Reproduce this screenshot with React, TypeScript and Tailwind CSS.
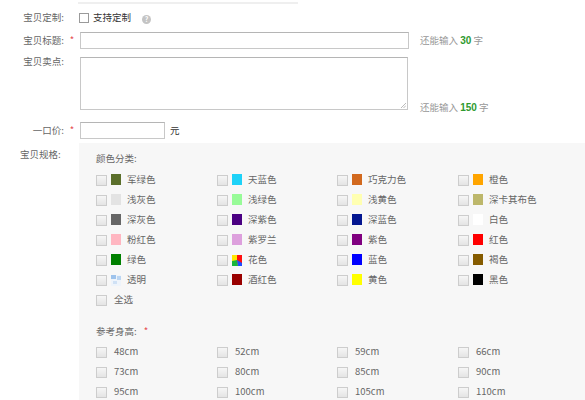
const colors = [
  { name: "军绿色", swatch: "bg-[#5b6f2b]" },
  { name: "天蓝色", swatch: "bg-[#1ed2f8]" },
  { name: "巧克力色", swatch: "bg-[#d2691e]" },
  { name: "橙色", swatch: "bg-[#ffa500]" },
  { name: "浅灰色", swatch: "bg-[#e3e3e3]" },
  { name: "浅绿色", swatch: "bg-[#98fb98]" },
  { name: "浅黄色", swatch: "bg-[#ffffb1]" },
  { name: "深卡其布色", swatch: "bg-[#bdb76b]" },
  { name: "深灰色", swatch: "bg-[#666666]" },
  { name: "深紫色", swatch: "bg-[#4b0082]" },
  { name: "深蓝色", swatch: "bg-[#041690]" },
  { name: "白色", swatch: "bg-white" },
  { name: "粉红色", swatch: "bg-[#ffb6c1]" },
  { name: "紫罗兰", swatch: "bg-[#dda0dd]" },
  { name: "紫色", swatch: "bg-[#800080]" },
  { name: "红色", swatch: "bg-[#ff0000]" },
  { name: "绿色", swatch: "bg-[#008000]" },
  { name: "花色", swatch: "flower" },
  { name: "蓝色", swatch: "bg-[#0000ff]" },
  { name: "褐色", swatch: "bg-[#855b00]" },
  { name: "透明", swatch: "clear" },
  { name: "酒红色", swatch: "bg-[#990000]" },
  { name: "黄色", swatch: "bg-[#ffff00]" },
  { name: "黑色", swatch: "bg-black" },
]

const sizes = ["48cm", "52cm", "59cm", "66cm", "73cm", "80cm", "85cm", "90cm", "95cm", "100cm", "105cm", "110cm"]

function Box() {
  return (
    <span className="inline-block w-[11px] h-[11px] shrink-0 border border-[#cdcdcd] bg-gradient-to-b from-[#f6f6f6] to-[#e4e4e4]"></span>
  )
}

function Swatch({ swatch }: { swatch: string }) {
  if (swatch === "flower") {
    return (
      <svg width="10" height="11" viewBox="0 0 10 11" className="shrink-0">
        <rect x="0" y="0" width="10" height="11" fill="#ffe600" />
        <path d="M5 0 H10 V11 H6 L5 5 Z" fill="#ff1010" />
        <path d="M0 6 L5 5 L6 11 H0 Z" fill="#19b53c" />
        <path d="M5 5 L10 8 V11 H6 Z" fill="#1f4cff" />
      </svg>
    )
  }
  if (swatch === "clear") {
    return (
      <svg width="10" height="11" viewBox="0 0 10 11" className="shrink-0">
        <rect x="0" y="0" width="10" height="11" fill="#eef4fb" />
        <rect x="0" y="0" width="5" height="4" fill="#9ec3ec" />
        <rect x="6" y="1" width="4" height="4" fill="#bcd6f2" />
        <rect x="2" y="6" width="4" height="3" fill="#cfe1f5" />
      </svg>
    )
  }
  return <span className={`inline-block w-[10px] h-[11px] shrink-0 ${swatch}`}></span>
}

function Label({ text, required }: { text: string; required?: boolean }) {
  return (
    <div className="flex w-[80px] shrink-0">
      <span className="w-[64px] text-right">{text}</span>
      <span className="w-[16px] text-center text-[#e5484b]">{required ? "*" : ""}</span>
    </div>
  )
}

function Remain({ n }: { n: string }) {
  return (
    <span className="text-[#999]">
      还能输入 <b className="text-[#2f9a2f] font-['Liberation_Sans',sans-serif] text-[10px]">{n}</b> 字
    </span>
  )
}

export default function App() {
  return (
    <div className="w-[585px] h-[400px] overflow-hidden bg-white text-[9.5px] leading-none text-[#666] font-['Noto_Sans_CJK_SC',sans-serif]">
      <div className="ml-[78px] mt-[2px] w-[220px] h-[2px] bg-[#efefef]"></div>

      <div className="flex items-center mt-[8px] h-[12px]">
        <Label text="宝贝定制:" />
        <span className="inline-block w-[10px] h-[10px] -ml-[1px] border border-[#9a9a9a] bg-white"></span>
        <span className="ml-[4px] text-[#333]">支持定制</span>
        <span className="ml-[11px] mt-[2px] w-[9px] h-[9px] rounded-full bg-[#c4c4c4] text-white text-[7px] font-bold flex items-center justify-center">?</span>
      </div>

      <div className="flex items-center mt-[8px] h-[17px]">
        <Label text="宝贝标题:" required />
        <div className="w-[329px] h-[17px] border border-[#c8c8c8] border-t-[#b5b5b5] bg-white"></div>
        <span className="ml-[11px]"><Remain n="30" /></span>
      </div>

      <div className="flex mt-[8px]">
        <Label text="宝贝卖点:" />
        <div className="relative w-[328px] h-[53px] border border-[#c8c8c8] border-t-[#b5b5b5] bg-white">
          <svg width="6" height="6" viewBox="0 0 6 6" className="absolute right-[1px] bottom-[1px]">
            <path d="M1 6 L6 1 M3.5 6 L6 3.5" stroke="#aaa" strokeWidth="0.8" />
          </svg>
        </div>
        <span className="ml-[12px] self-end mb-[-3px]"><Remain n="150" /></span>
      </div>

      <div className="flex items-center mt-[12px] h-[17px]">
        <Label text="一口价:" required />
        <div className="w-[85px] h-[17px] border border-[#c8c8c8] border-t-[#b5b5b5] bg-white"></div>
        <span className="ml-[5px] text-[#333]">元</span>
      </div>

      <div className="flex mt-[4px]">
        <div className="w-[79px] shrink-0 pt-[7px]">
          <span className="ml-[20px]">宝贝规格:</span>
        </div>
        <div className="flex-1 h-[260px] bg-[#f7f7f7] pl-[17px] pt-[6px]">
          <div className="h-[20px] flex items-center">颜色分类:</div>
          <div className="grid grid-cols-[121px_120px_121px_121px] pt-[1px]">
            {colors.map((c) => (
              <div key={c.name} className="h-[20px] flex items-center">
                <Box />
                <span className="ml-[4px]"><Swatch swatch={c.swatch} /></span>
                <span className="ml-[6px]">{c.name}</span>
              </div>
            ))}
            <div className="h-[20px] flex items-center">
              <Box />
              <span className="ml-[7px]">全选</span>
            </div>
          </div>
          <div className="mt-[12px] h-[19px] flex items-center">
            参考身高:<span className="ml-[7px] text-[#e5484b]">*</span>
          </div>
          <div className="grid grid-cols-[121px_120px_121px_121px] pt-[1px]">
            {sizes.map((s) => (
              <div key={s} className="h-[20px] flex items-center">
                <Box />
                <span className="ml-[7px]">{s}</span>
              </div>
            ))}
          </div>
        </div>
      </div>
    </div>
  )
}
